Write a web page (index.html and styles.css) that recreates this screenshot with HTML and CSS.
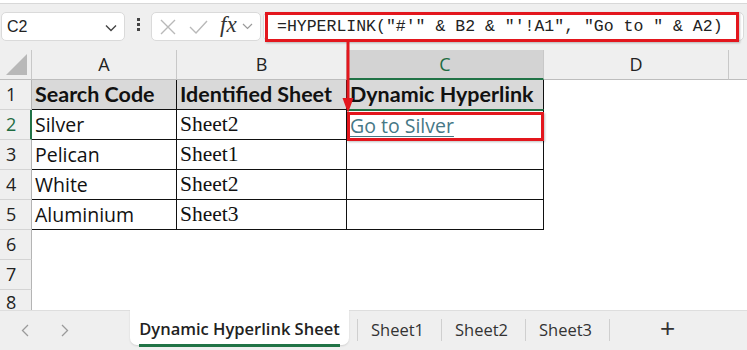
FILE: index.html
```html
<!DOCTYPE html>
<html>
<head>
<meta charset="utf-8">
<link rel="stylesheet" href="styles.css">
</head>
<body>
<div class="app">
  <div class="topstrip"></div>
  <div class="fbar">
    <div class="namebox">
      <span class="nb-text">C2</span>
      <svg class="nb-chev" width="12" height="8" viewBox="0 0 12 8"><path d="M1 1.5 L6 6.5 L11 1.5" fill="none" stroke="#444" stroke-width="1.4"/></svg>
    </div>
    <div class="dots"><i></i><i></i><i></i></div>
    <div class="fxbox">
      <svg class="ic-x" width="16" height="16" viewBox="0 0 16 16"><path d="M1 1 L15 15 M15 1 L1 15" stroke="#b9b9b9" stroke-width="1.4" fill="none"/></svg>
      <svg class="ic-check" width="19" height="14" viewBox="0 0 19 14"><path d="M1 7 L7 13 L18 1" stroke="#b9b9b9" stroke-width="1.4" fill="none"/></svg>
      <span class="fx">fx</span>
      <svg class="ic-chev" width="11" height="7" viewBox="0 0 11 7"><path d="M1 1 L5.5 5.5 L10 1" fill="none" stroke="#9a9a9a" stroke-width="1.2"/></svg>
    </div>
    <div class="ffield">
      <div class="redbox">=HYPERLINK("#'" &amp; B2 &amp; "'!A1", "Go to " &amp; A2)</div>
    </div>
  </div>
  <div class="sheet">
    <div class="grid">
      <div class="corner"><span class="tri"></span></div>
      <div class="ch">A</div>
      <div class="ch">B</div>
      <div class="ch ch-sel">C</div>
      <div class="ch">D</div>
      <div class="ch ch-last"></div>

      <div class="rh">1</div>
      <div class="c hd">Search Code</div>
      <div class="c hd">Identified Sheet</div>
      <div class="c hd">Dynamic Hyperlink</div>
      <div class="e"></div><div class="e"></div>

      <div class="rh rh-sel">2</div>
      <div class="c sa">Silver</div>
      <div class="c sb">Sheet2</div>
      <div class="c link sel"><span>Go to Silver</span></div>
      <div class="e"></div><div class="e"></div>

      <div class="rh">3</div>
      <div class="c sa">Pelican</div>
      <div class="c sb">Sheet1</div>
      <div class="c"></div>
      <div class="e"></div><div class="e"></div>

      <div class="rh">4</div>
      <div class="c sa">White</div>
      <div class="c sb">Sheet2</div>
      <div class="c"></div>
      <div class="e"></div><div class="e"></div>

      <div class="rh">5</div>
      <div class="c sa">Aluminium</div>
      <div class="c sb">Sheet3</div>
      <div class="c"></div>
      <div class="e"></div><div class="e"></div>

      <div class="rh">6</div>
      <div class="e"></div><div class="e"></div><div class="e"></div><div class="e"></div><div class="e"></div>
      <div class="rh">7</div>
      <div class="e"></div><div class="e"></div><div class="e"></div><div class="e"></div><div class="e"></div>
      <div class="rh rh8">8</div>
      <div class="e"></div><div class="e"></div><div class="e"></div><div class="e"></div><div class="e"></div>
    </div>
    <div class="c2box"></div>
  </div>
  <div class="tabbar">
    <div class="nav">
      <svg width="8" height="13" viewBox="0 0 8 13"><path d="M7 1 L1.5 6.5 L7 12" fill="none" stroke="#9a9a9a" stroke-width="1.3"/></svg>
      <svg width="8" height="13" viewBox="0 0 8 13"><path d="M1 1 L6.5 6.5 L1 12" fill="none" stroke="#9a9a9a" stroke-width="1.3"/></svg>
    </div>
    <div class="tab active"><span>Dynamic Hyperlink Sheet</span></div>
    <div class="sep"></div>
    <div class="tab">Sheet1</div>
    <div class="sep"></div>
    <div class="tab">Sheet2</div>
    <div class="sep"></div>
    <div class="tab">Sheet3</div>
    <div class="sep"></div>
    <div class="plus">+</div>
  </div>
  <svg class="arrow" width="20" height="80" viewBox="0 0 20 80">
    <line x1="10" y1="0" x2="10" y2="58" stroke="#e3161d" stroke-width="3"/>
    <polygon points="4.5,56 15.5,56 10,71" fill="#e3161d"/>
  </svg>
</div>
</body>
</html>
```

FILE: styles.css
```css
* { box-sizing: border-box; }
html, body { margin: 0; padding: 0; }
body { width: 747px; height: 350px; overflow: hidden; background: #fff; font-family: "Open Sans", sans-serif; }
.app { position: relative; width: 747px; height: 350px; overflow: hidden; }

.topstrip { height: 4px; background: #fff; border-bottom: 1px solid #d8d8d8; }

.fbar { height: 46px; background: #efefef; display: flex; align-items: flex-start; padding-top: 8px; }
.namebox { margin-left: 1px; width: 124px; height: 29px; background: #fff; border: 1px solid #dadada; border-radius: 5px; display: flex; align-items: center; justify-content: space-between; padding: 0 7px 0 5px; }
.nb-text { font-family: "Liberation Sans", Arial, sans-serif; font-size: 16px; color: #222; }
.nb-chev { margin-top: 2px; }
.dots { width: 26px; display: flex; flex-direction: column; align-items: center; gap: 2px; padding-top: 6px; }
.dots i { display: block; width: 3px; height: 3px; background: #444; }
.fxbox { width: 110px; height: 29px; background: #fff; border: 1px solid #dadada; border-radius: 5px; display: flex; align-items: center; padding-left: 8px; }
.ic-x { margin-right: 13px; }
.ic-check { margin-right: 12px; }
.fx { font-family: "Liberation Serif", serif; font-style: italic; font-size: 23px; color: #333; margin-top: -4px; }
.ic-chev { margin-left: 5px; }
.ffield { flex: 1; margin-left: 2px; margin-right: 3px; height: 29px; background: #fff; border: 1px solid #dadada; border-radius: 5px; position: relative; }
.redbox { position: absolute; left: 1px; top: -1px; width: 474px; height: 30px; border: 3px solid #e3161d; font-family: "Liberation Mono", monospace; font-size: 16.5px; color: #222; padding-left: 9px; line-height: 23px; box-shadow: 1px 1px 2px rgba(0,0,0,0.25); white-space: nowrap; }

.sheet { position: relative; height: 260px; overflow: hidden; }
.grid { display: grid; grid-template-columns: 32px 145px 170px 197px 185px 1fr; grid-template-rows: 30px repeat(8, 30px); }
.corner { background: #efefef; border-right: 1px solid #c8c8c8; border-bottom: 1px solid #bdbdbd; position: relative; }
.tri { position: absolute; right: 4px; bottom: 4px; width: 0; height: 0; border-left: 21px solid transparent; border-bottom: 21px solid #b8b8b8; }
.ch { background: #efefef; border-right: 1px solid #c8c8c8; border-bottom: 1px solid #bdbdbd; font-family: "Open Sans", sans-serif; font-size: 18px; color: #222; text-align: center; line-height: 29px; }
.ch-sel { background: #d3d3d3; color: #1e6b41; border-bottom: 2px solid #217346; }
.ch-last { border-right: none; }
.rh { background: #efefef; border-right: 1px solid #b4b4b4; border-bottom: 1px solid #d4d4d4; font-family: "Open Sans", sans-serif; font-size: 18px; color: #222; padding-left: 6px; line-height: 29px; }
.rh8 { line-height: 24px; }
.rh-sel { color: #1e6b41; border-right: 2px solid #217346; }
.c { border-right: 1px solid #111; border-bottom: 1px solid #111; padding-left: 3px; line-height: 29px; white-space: nowrap; overflow: hidden; color: #111; }
.hd { background: #d9d9d9; font-family: "Lato", sans-serif; font-weight: 700; font-size: 21.5px; }
.sa { font-family: "Open Sans", sans-serif; font-size: 19.5px; }
.sb { font-family: "Liberation Serif", serif; font-size: 21.5px; }
.link { font-family: "Open Sans", sans-serif; font-size: 19.5px; color: #467886; }
.link span { text-decoration: underline; text-underline-offset: 3px; text-decoration-thickness: 1px; }
.sel { border-top: 2px solid #217346; margin-top: -1px; }
.e { background: #fff; }

.c2box { position: absolute; left: 347px; top: 62px; width: 197px; height: 29px; border: 3px solid #e3161d; box-shadow: 1px 1px 2px rgba(0,0,0,0.25); }

.tabbar { height: 40px; background: #efefef; border-top: 1px solid #dedede; display: flex; align-items: flex-start; }
.nav { width: 130px; height: 39px; display: flex; align-items: center; gap: 32px; padding-left: 21px; }
.tab { width: 83px; height: 39px; line-height: 37px; font-family: "Open Sans", sans-serif; font-size: 16.5px; color: #333; padding-left: 13px; white-space: nowrap; }
.tab.active { width: 219px; height: 35px; margin-top: -1px; background: #fff; border-radius: 0 0 7px 7px; font-weight: 600; font-size: 16.5px; color: #222; text-align: center; padding: 0; box-shadow: 0 1px 2px rgba(0,0,0,0.12); }
.tab.active span { display: inline-block; line-height: 30px; border-bottom: 3px solid #217346; padding-top: 1px; }
.sep { width: 1px; height: 22px; margin-top: 8px; background: #cfcfcf; }
.tab.active + .sep { margin-left: 8px; }
.plus { margin-left: 50px; font-family: "Liberation Sans", sans-serif; font-size: 26px; line-height: 35px; color: #333; }

.arrow { position: absolute; left: 338px; top: 42px; }
```
